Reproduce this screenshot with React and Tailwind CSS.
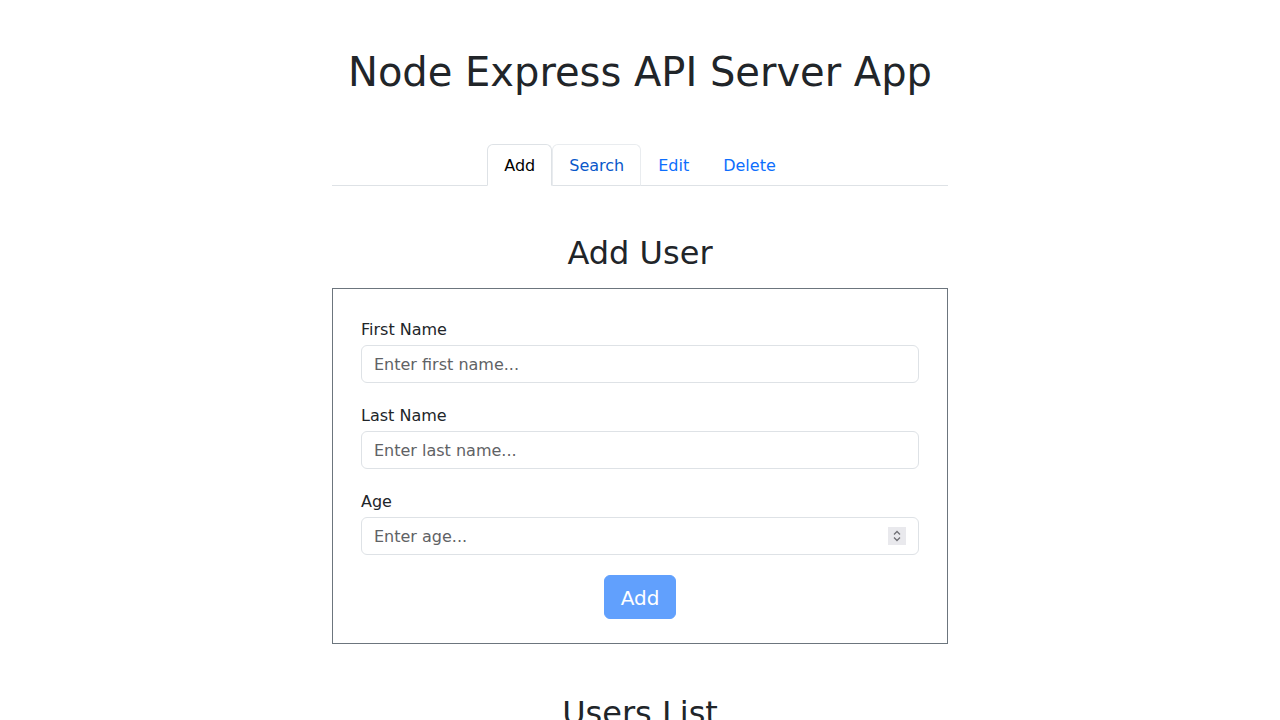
import { useState } from "react";

const tabs = ["Add", "Search", "Edit", "Delete"];

function Spinner() {
  return (
    <span className="absolute right-[13px] top-[10px] w-[18px] h-[18px] bg-[#e9e9ed] flex items-center justify-center pointer-events-none">
      <svg width="12" height="16" viewBox="0 0 12 16" fill="none" stroke="#707075" strokeWidth="1.3">
        <path d="M3 6.5 L6 3.5 L9 6.5" />
        <path d="M3 9.5 L6 12.5 L9 9.5" />
      </svg>
    </span>
  );
}

function Field({ label, placeholder, type = "text" }) {
  return (
    <div className="mb-5">
      <label className="block pt-px mb-[3px] text-base leading-6">{label}</label>
      <div className="relative">
        <input
          type={type}
          placeholder={placeholder}
          className="block w-full h-[38px] px-3 py-1.5 text-base leading-6 border border-[#dee2e6] rounded-[6px] bg-white placeholder:text-[#5f6265] outline-none [appearance:textfield] [&::-webkit-inner-spin-button]:appearance-none"
        />
        {type === "number" && <Spinner />}
      </div>
    </div>
  );
}

export default function App() {
  const [active, setActive] = useState("Add");

  return (
    <div className="min-h-screen bg-white text-[#212529] font-['DejaVu_Sans',sans-serif]">
      <div className="w-[616px] mx-auto">
        <h1 className="pt-12 text-[40px] leading-[1.2] text-center">
          Node Express API Server App
        </h1>

        <ul className="mt-12 flex justify-center border-b border-[#dee2e6]">
          {tabs.map((t) => (
            <li key={t} className="-mb-px">
              <button
                onClick={() => setActive(t)}
                className={
                  t === active
                    ? "px-4 pt-[9px] pb-[7px] text-base leading-6 border border-[#dee2e6] border-b-white rounded-t-[6px] bg-white text-black"
                    : t === "Search"
                    ? "px-4 pt-[9px] pb-[7px] text-base leading-6 border border-[#e9ecef] border-b-[#dee2e6] rounded-t-[6px] text-[#0a58ca]"
                    : "px-4 pt-[9px] pb-[7px] text-base leading-6 border border-transparent rounded-t-[6px] text-[#0d6efd]"
                }
              >
                {t}
              </button>
            </li>
          ))}
        </ul>

        <h2 className="mt-12 mb-4 text-[32px] leading-[1.2] text-center">
          Add User
        </h2>

        <form className="border border-[#6c757d] px-7 pt-7 pb-6">
          <Field label="First Name" placeholder="Enter first name..." />
          <Field label="Last Name" placeholder="Enter last name..." />
          <Field label="Age" placeholder="Enter age..." type="number" />
          <div className="flex justify-center">
            <button
              type="button"
              disabled
              className="h-[44px] px-4 pt-[2px] text-[20px] leading-[30px] text-white bg-[#0d6efd] opacity-65 rounded-[6px] border border-[#0d6efd]"
            >
              Add
            </button>
          </div>
        </form>

        <h2 className="mt-[50px] text-[32px] leading-[1.2] text-center">
          Users List
        </h2>
      </div>
    </div>
  );
}
